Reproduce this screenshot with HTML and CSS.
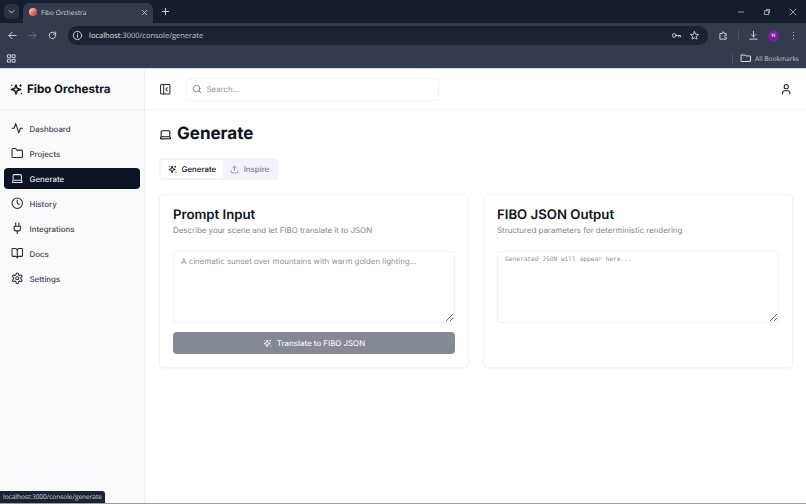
FILE: index.html
```html
<!DOCTYPE html>
<html lang="en">
<head>
    <meta charset="UTF-8">
    <title>Fibo Orchestra</title>
    <link rel="stylesheet" href="styles.css">
</head>
<body>
    <svg class="icon-defs" width="0" height="0">
        <symbol id="i-spark" viewBox="0 0 24 24" fill="none" stroke="currentColor" stroke-width="2.6" stroke-linecap="round" stroke-linejoin="round">
            <path d="M11 3.500l2.200 6.300 6.300 2.200-6.300 2.200L11 20.500l-2.200-6.300L2.500 12l6.300-2.200z"/>
            <path d="M3.500 4v.01M19.500 3.500v2M18.500 4.500h2M21 19.500v.01"/>
        </symbol>
        <symbol id="i-laptop" viewBox="0 0 24 24" fill="none" stroke="currentColor" stroke-width="2" stroke-linecap="round" stroke-linejoin="round">
            <path d="M20 16V7a2 2 0 0 0-2-2H6a2 2 0 0 0-2 2v9m16 0H4m16 0 1.280 2.550a1 1 0 0 1-.9 1.450H3.620a1 1 0 0 1-.9-1.450L4 16"/>
        </symbol>
    </svg>

    <div class="browser-tabs">
        <div class="tab-search">
            <svg viewBox="0 0 24 24" class="chrome-icon"><path d="M7 10l5 5 5-5"/></svg>
        </div>
        <div class="tab">
            <span class="favicon"></span>
            <span class="tab-title">Fibo Orchestra</span>
            <svg viewBox="0 0 24 24" class="chrome-icon tab-close"><path d="M6 6l12 12M18 6L6 18"/></svg>
        </div>
        <svg viewBox="0 0 24 24" class="chrome-icon new-tab"><path d="M12 5v14M5 12h14"/></svg>
        <div class="window-controls">
            <svg viewBox="0 0 24 24" class="chrome-icon"><path d="M6 12h12"/></svg>
            <svg viewBox="0 0 24 24" class="chrome-icon"><path d="M7 9h9v9H7zM10 9V6h8v8h-2"/></svg>
            <svg viewBox="0 0 24 24" class="chrome-icon"><path d="M5 5l14 14M19 5L5 19"/></svg>
        </div>
    </div>

    <div class="browser-toolbar">
        <svg viewBox="0 0 24 24" class="chrome-icon"><path d="M20 12H5M11 5l-7 7 7 7"/></svg>
        <svg viewBox="0 0 24 24" class="chrome-icon dim"><path d="M4 12h15M13 5l7 7-7 7"/></svg>
        <svg viewBox="0 0 24 24" class="chrome-icon"><path d="M19 12a7 7 0 1 1-2-5l2 2M19 4v5h-5"/></svg>
        <div class="omnibox">
            <svg viewBox="0 0 24 24" class="chrome-icon"><circle cx="12" cy="12" r="9"/><path d="M12 11v5M12 8v.5"/></svg>
            <span class="url">localhost<span class="url-rest">:3000/console/generate</span></span>
            <svg viewBox="0 0 24 24" class="chrome-icon key"><circle cx="7" cy="12" r="4"/><path d="M11 12h10v3M17 12v3"/></svg>
            <svg viewBox="0 0 24 24" class="chrome-icon"><path d="M12 3.500l2.600 5.500 6 .8-4.400 4.100 1.100 6-5.300-2.900-5.300 2.900 1.100-6-4.400-4.100 6-.8z"/></svg>
        </div>
        <svg viewBox="0 0 24 24" class="chrome-icon"><path d="M5 8h4V6a2 2 0 0 1 4 0v2h5v4h-2a2 2 0 0 0 0 4h2v4H5z"/></svg>
        <span class="toolbar-sep"></span>
        <svg viewBox="0 0 24 24" class="chrome-icon"><path d="M12 3v12M7 10l5 5 5-5M4 20h16"/></svg>
        <span class="avatar">H</span>
        <svg viewBox="0 0 24 24" class="chrome-icon dots"><path d="M12 5v.5M12 12v.5M12 19v.5"/></svg>
    </div>

    <div class="browser-bookmarks">
        <svg viewBox="0 0 24 24" class="chrome-icon"><path d="M4 4h6v6H4zM14 4h6v6h-6zM4 14h6v6H4zM14 14h6v6h-6z"/></svg>
        <span class="toolbar-sep"></span>
        <svg viewBox="0 0 24 24" class="chrome-icon folder"><path d="M3 6h7l2 2h9v11H3z"/></svg>
        <span class="all-bookmarks">All Bookmarks</span>
    </div>

    <div class="app">
        <aside class="sidebar">
            <div class="brand">
                <svg class="brand-icon"><use href="#i-spark"/></svg>
                <span>Fibo Orchestra</span>
            </div>
            <nav class="nav">
                <a class="nav-item">
                    <svg viewBox="0 0 24 24" class="nav-icon"><path d="M22 12h-4l-3 9L9 3l-3 9H2"/></svg>
                    Dashboard
                </a>
                <a class="nav-item">
                    <svg viewBox="0 0 24 24" class="nav-icon"><path d="M20 20a2 2 0 0 0 2-2V8a2 2 0 0 0-2-2h-7.900a2 2 0 0 1-1.690-.9L9.600 3.900A2 2 0 0 0 7.930 3H4a2 2 0 0 0-2 2v13a2 2 0 0 0 2 2Z"/></svg>
                    Projects
                </a>
                <a class="nav-item active">
                    <svg class="nav-icon"><use href="#i-laptop"/></svg>
                    Generate
                </a>
                <a class="nav-item">
                    <svg viewBox="0 0 24 24" class="nav-icon"><circle cx="12" cy="12" r="10"/><path d="M12 6v6l4 2"/></svg>
                    History
                </a>
                <a class="nav-item">
                    <svg viewBox="0 0 24 24" class="nav-icon"><path d="M12 22v-5M9 8V2M15 8V2M18 8v5a4 4 0 0 1-4 4h-4a4 4 0 0 1-4-4V8Z"/></svg>
                    Integrations
                </a>
                <a class="nav-item">
                    <svg viewBox="0 0 24 24" class="nav-icon"><path d="M12 7v14M3 18a1 1 0 0 1-1-1V4a1 1 0 0 1 1-1h5a4 4 0 0 1 4 4 4 4 0 0 1 4-4h5a1 1 0 0 1 1 1v13a1 1 0 0 1-1 1h-6a3 3 0 0 0-3 3 3 3 0 0 0-3-3z"/></svg>
                    Docs
                </a>
                <a class="nav-item">
                    <svg viewBox="0 0 24 24" class="nav-icon"><path d="M12.220 2h-.44a2 2 0 0 0-2 2v.18a2 2 0 0 1-1 1.730l-.43.25a2 2 0 0 1-2 0l-.15-.08a2 2 0 0 0-2.730.73l-.22.380a2 2 0 0 0 .73 2.730l.15.1a2 2 0 0 1 1 1.720v.51a2 2 0 0 1-1 1.740l-.15.09a2 2 0 0 0-.73 2.730l.22.380a2 2 0 0 0 2.730.73l.15-.08a2 2 0 0 1 2 0l.43.25a2 2 0 0 1 1 1.730V20a2 2 0 0 0 2 2h.44a2 2 0 0 0 2-2v-.18a2 2 0 0 1 1-1.730l.43-.25a2 2 0 0 1 2 0l.15.08a2 2 0 0 0 2.730-.73l.22-.39a2 2 0 0 0-.73-2.730l-.15-.08a2 2 0 0 1-1-1.740v-.5a2 2 0 0 1 1-1.740l.15-.09a2 2 0 0 0 .73-2.730l-.22-.380a2 2 0 0 0-2.730-.73l-.15.08a2 2 0 0 1-2 0l-.43-.25a2 2 0 0 1-1-1.730V4a2 2 0 0 0-2-2z"/><circle cx="12" cy="12" r="3"/></svg>
                    Settings
                </a>
            </nav>
        </aside>

        <div class="main">
            <header class="topbar">
                <svg viewBox="0 0 24 24" class="topbar-icon"><rect x="3" y="3" width="18" height="18" rx="2"/><path d="M9 3v18M16 15l-3-3 3-3"/></svg>
                <div class="search">
                    <svg viewBox="0 0 24 24" class="search-icon"><circle cx="11" cy="11" r="8"/><path d="M21 21l-4.300-4.300"/></svg>
                    <span>Search...</span>
                </div>
                <svg viewBox="0 0 24 24" class="topbar-icon user-icon"><path d="M19 21v-2a4 4 0 0 0-4-4H9a4 4 0 0 0-4 4v2"/><circle cx="12" cy="7" r="4"/></svg>
            </header>

            <main class="content">
                <h1 class="page-title">
                    <svg class="title-icon"><use href="#i-laptop"/></svg>
                    Generate
                </h1>

                <div class="tabs">
                    <div class="tabs-item selected">
                        <svg class="tabs-icon"><use href="#i-spark"/></svg>
                        Generate
                    </div>
                    <div class="tabs-item">
                        <svg viewBox="0 0 24 24" class="tabs-icon"><path d="M21 15v4a2 2 0 0 1-2 2H5a2 2 0 0 1-2-2v-4M17 8l-5-5-5 5M12 3v12"/></svg>
                        Inspire
                    </div>
                </div>

                <div class="cards">
                    <section class="card">
                        <h2>Prompt Input</h2>
                        <p>Describe your scene and let FIBO translate it to JSON</p>
                        <textarea class="prompt-box" placeholder="A cinematic sunset over mountains with warm golden lighting..."></textarea>
                        <button class="translate-btn">
                            <svg class="btn-icon"><use href="#i-spark"/></svg>
                            Translate to FIBO JSON
                        </button>
                    </section>
                    <section class="card">
                        <h2>FIBO JSON Output</h2>
                        <p>Structured parameters for deterministic rendering</p>
                        <textarea class="json-box" placeholder="Generated JSON will appear here..."></textarea>
                    </section>
                </div>
            </main>
        </div>
    </div>

    <div class="status-link">localhost:3000/console/generate</div>
</body>
</html>
```

FILE: styles.css
```css
* {
    box-sizing: border-box;
    text-rendering: geometricPrecision;
}
html, body {
    height: 100%;
}
body {
    margin: 0;
    width: 806px;
    height: 504px;
    overflow: hidden;
    display: flex;
    flex-direction: column;
    font-family: Inter, 'Liberation Sans', sans-serif;
    background: #fff;
    color: #0b1220;
    border-bottom: 1px solid #9c9c9c;
}
.icon-defs {
    position: absolute;
}

/* browser frame */
.browser-tabs {
    height: 23px;
    flex: none;
    display: flex;
    align-items: flex-end;
    background: #151e2d;
    padding-left: 4px;
}
.chrome-icon {
    width: 11px;
    height: 11px;
    flex: none;
    fill: none;
    stroke: #d5dae3;
    stroke-width: 2;
    stroke-linecap: round;
    stroke-linejoin: round;
}
.chrome-icon.dim {
    stroke: #667084;
}
.tab-search {
    width: 15px;
    height: 15px;
    margin-bottom: 4px;
    border-radius: 5px;
    background: #2a3344;
    display: flex;
    align-items: center;
    justify-content: center;
}
.tab {
    width: 130px;
    height: 20px;
    margin-left: 4px;
    padding: 0 4px 2px 6px;
    display: flex;
    align-items: center;
    background: #333c4e;
    border-radius: 7px 7px 0 0;
}
.favicon {
    width: 8px;
    height: 8px;
    border-radius: 50%;
    background: linear-gradient(135deg, #f2a7a0 30%, #dc4f55 70%);
}
.tab-title {
    margin-left: 4px;
    flex: 1;
    font-size: 6.600px;
    color: #d5dae3;
    font-family: 'Open Sans', sans-serif;
}
.tab-close {
    width: 9px;
    height: 9px;
}
.new-tab {
    margin: 0 0 6px 7px;
}
.window-controls {
    margin-left: auto;
    align-self: center;
    display: flex;
    gap: 16px;
    padding-right: 8px;
}
.window-controls .chrome-icon {
    width: 10px;
    height: 10px;
    stroke-width: 1.600;
}
.browser-toolbar {
    height: 25px;
    flex: none;
    display: flex;
    align-items: center;
    gap: 9px;
    padding: 0 7px;
    background: #333c4e;
}
.omnibox {
    width: 640px;
    flex: none;
    height: 19px;
    margin: 0 1px;
    padding: 0 8px 0 4px;
    display: flex;
    align-items: center;
    gap: 6px;
    background: #1b2333;
    border-radius: 10px;
}
.url {
    flex: 1;
    padding-top: 1px;
    font-size: 7.500px;
    color: #e6e9ee;
    font-family: 'Open Sans', sans-serif;
}
.url-rest {
    color: #c2c7d0;
}
.key {
    margin-right: 1px;
}
.toolbar-sep {
    width: 1px;
    height: 11px;
    background: #4a5366;
}
.avatar {
    width: 12px;
    height: 12px;
    border-radius: 50%;
    background: #7b1fa2;
    color: #f1dff6;
    font-size: 5px;
    font-weight: 600;
    display: flex;
    align-items: center;
    justify-content: center;
}
.browser-bookmarks {
    height: 20px;
    flex: none;
    display: flex;
    align-items: center;
    padding: 0 7px 0 6px;
    gap: 7px;
    background: #333c4e;
}
.browser-bookmarks .toolbar-sep {
    margin-left: auto;
}
.folder {
    width: 12px;
    height: 12px;
}
.all-bookmarks {
    margin-left: -4px;
    font-size: 6.600px;
    color: #c8cdd6;
    font-family: 'Open Sans', sans-serif;
}

/* app */
.app {
    flex: 1;
    display: flex;
    min-height: 0;
    border-top: 1px solid #d8dbe0;
}
.sidebar {
    width: 145px;
    flex: none;
    background: #f8fafc;
    border-right: 1px solid #eef1f5;
}
.brand {
    height: 41px;
    padding: 0 10px;
    display: flex;
    align-items: center;
    gap: 4px;
    font-size: 11.600px;
    font-weight: 700;
    color: #0b1220;
    border-bottom: 1px solid #eef1f5;
}
.brand-icon {
    width: 13px;
    height: 13px;
}
.nav {
    padding: 8px 4px;
    display: flex;
    flex-direction: column;
    gap: 4px;
}
.nav-item {
    height: 21px;
    padding: 0 7px;
    display: flex;
    align-items: center;
    gap: 6px;
    font-size: 7.900px;
    font-weight: 500;
    color: #3d4759;
    border-radius: 4px;
}
.nav-item.active {
    background: #0b1324;
    color: #e5e8ed;
}
.nav-icon {
    width: 12.500px;
    height: 12.500px;
    flex: none;
    fill: none;
    stroke: currentColor;
    stroke-width: 2;
    stroke-linecap: round;
    stroke-linejoin: round;
}
.nav-item:not(.active) .nav-icon {
    stroke: #1f2937;
}
.main {
    flex: 1;
    min-width: 0;
    display: flex;
    flex-direction: column;
}
.topbar {
    height: 41px;
    flex: none;
    padding: 0 14px;
    display: flex;
    align-items: center;
    border-bottom: 1px solid #eef1f5;
}
.topbar-icon {
    width: 12.500px;
    height: 12.500px;
    flex: none;
    fill: none;
    stroke: #1f2937;
    stroke-width: 2;
    stroke-linecap: round;
    stroke-linejoin: round;
}
.search {
    width: 253px;
    height: 23px;
    margin-left: 14px;
    padding: 0 5px;
    display: flex;
    align-items: center;
    gap: 5px;
    font-size: 7.900px;
    color: #8a93a3;
    border: 1px solid #eef1f5;
    border-radius: 4px;
}
.search-icon {
    width: 10px;
    height: 10px;
    fill: none;
    stroke: #6b7482;
    stroke-width: 2;
    stroke-linecap: round;
}
.user-icon {
    margin-left: auto;
}
.content {
    padding: 13px 13px 0 14px;
}
.page-title {
    margin: 0;
    height: 22px;
    display: flex;
    align-items: center;
    gap: 5px;
    font-size: 17px;
    font-weight: 700;
    line-height: 22px;
    color: #0b1220;
}
.title-icon {
    width: 13px;
    height: 13px;
    flex: none;
}
.tabs {
    width: fit-content;
    height: 22px;
    margin-top: 13px;
    padding: 2px;
    display: flex;
    background: #f1f5f9;
    border-radius: 4px;
}
.tabs-item {
    height: 18px;
    padding: 0 7px;
    display: flex;
    align-items: center;
    gap: 4.500px;
    font-size: 7.900px;
    font-weight: 500;
    color: #7a8494;
    border-radius: 3px;
}
.tabs-item.selected {
    background: #fff;
    color: #0b1220;
}
.tabs-icon {
    width: 9px;
    height: 9px;
    fill: none;
    stroke: currentColor;
    stroke-width: 2;
    stroke-linecap: round;
    stroke-linejoin: round;
}
.cards {
    margin-top: 14px;
    display: grid;
    grid-template-columns: 1fr 1fr;
    gap: 14px;
}
.card {
    height: 174px;
    padding: 12px 13px 0;
    display: flex;
    flex-direction: column;
    background: #fff;
    border: 1px solid #eef1f5;
    border-radius: 5px;
    box-shadow: 0 1px 2px rgba(15, 23, 42, 0.04);
}
.card h2 {
    margin: 0;
    font-size: 13.200px;
    line-height: 16px;
    font-weight: 600;
    color: #0b1220;
}
.card p {
    margin: 2px 0 0;
    font-size: 7.900px;
    line-height: 11px;
    color: #7a8494;
}
.card textarea {
    display: block;
    width: 100%;
    height: 72px;
    margin-top: 15px;
    padding: 4px 7px;
    background: #fff;
    border: 1px solid #eef1f5;
    border-radius: 4px;
    outline: none;
}
.card textarea::placeholder {
    color: #8a93a3;
    opacity: 1;
}
.prompt-box {
    font-family: Inter, sans-serif;
    font-size: 7.900px;
}
.json-box {
    font-family: 'DejaVu Sans Mono', monospace;
    font-size: 6.200px;
}
.translate-btn {
    height: 22px;
    margin-top: 9px;
    display: flex;
    align-items: center;
    justify-content: center;
    gap: 5px;
    font-family: Inter, sans-serif;
    font-size: 7.900px;
    font-weight: 500;
    color: #f2f3f5;
    background: #858994;
    border: 0;
    border-radius: 4px;
}
.btn-icon {
    width: 9px;
    height: 9px;
}

/* link preview sits over the page */
.status-link {
    position: absolute;
    left: 0;
    bottom: 1px;
    width: 105px;
    height: 12px;
    padding: 0 3px;
    font-family: 'Open Sans', sans-serif;
    font-size: 6.500px;
    line-height: 12px;
    color: #d5dae3;
    background: #1b2333;
    border-radius: 0 3px 0 0;
}
```
